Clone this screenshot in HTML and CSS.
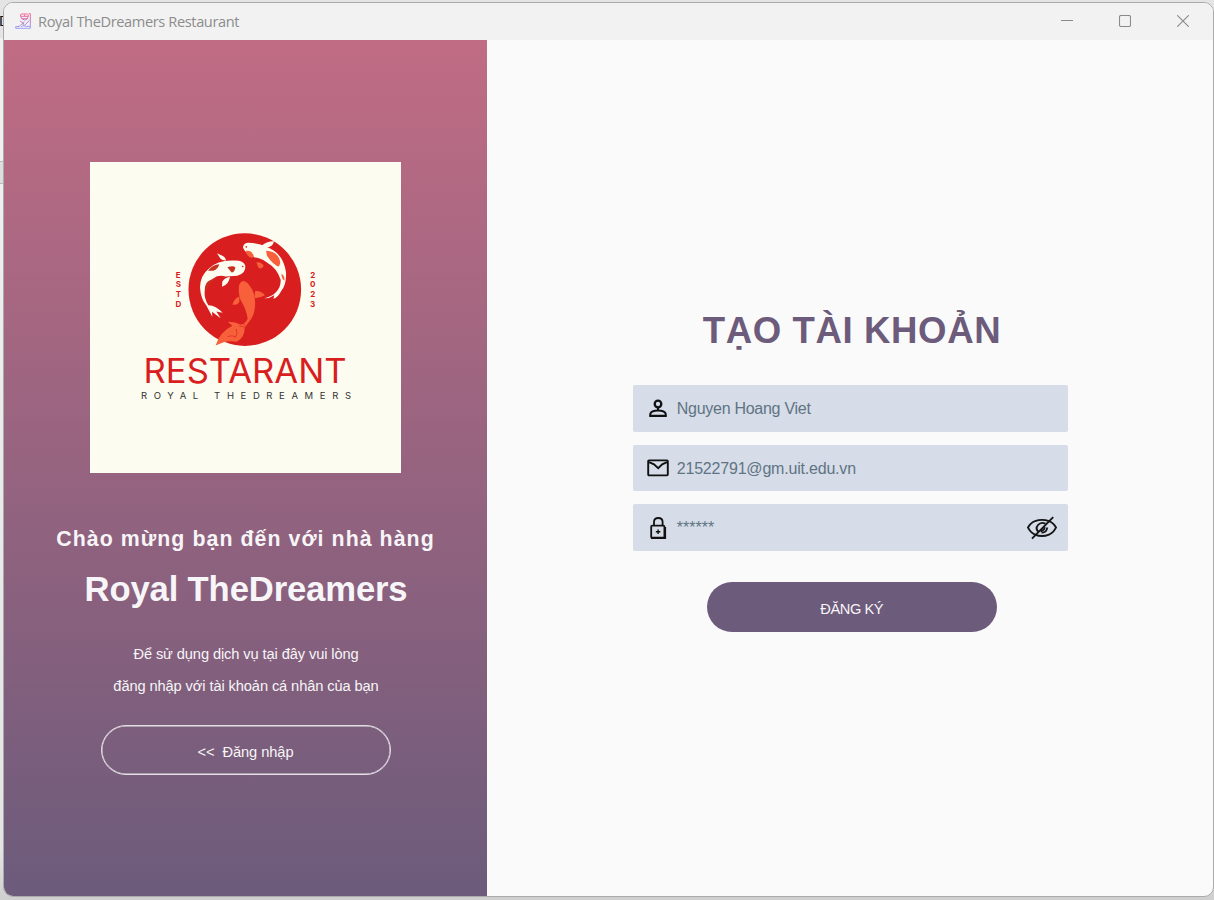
FILE: index.html
```html
<!DOCTYPE html>
<html lang="vi">
<head>
<meta charset="utf-8">
<title>Royal TheDreamers Restaurant</title>
<link rel="stylesheet" href="styles.css">
</head>
<body>
<div class="behind-text">D</div>
<div class="behind-strip"></div>
<main class="window">
  <header class="titlebar">
    <svg class="app-icon" width="16" height="16" viewBox="0 0 48 48" fill="none" stroke-width="2.6">
      <defs><linearGradient id="ic" x1="0" y1="0" x2="0" y2="48" gradientUnits="userSpaceOnUse"><stop offset="0" stop-color="#ff4f7d"/><stop offset=".5" stop-color="#b96fc0"/><stop offset="1" stop-color="#8a9cff"/></linearGradient></defs>
      <g stroke="url(#ic)"><path d="M17 11q-3-8 4-8h16q6 2 2 8l-2 6H20z"/><path d="M41 2h5v44H2v-5h10M20 17q9 9 18 0M18 10h22M29 4v6M15 24l9 6-10 9-6 2M27 26l-3 10M43 22L30 36l-12 5M28 40h18"/></g>
    </svg>
    <h1 class="window-title">Royal TheDreamers Restaurant</h1>
    <div class="controls">
      <svg width="12" height="12" viewBox="0 0 12 12"><path d="M0 5.5h12"/></svg>
      <svg width="12" height="12" viewBox="0 0 12 12"><rect x=".5" y=".5" width="11" height="11" rx="1.5"/></svg>
      <svg width="12" height="12" viewBox="0 0 12 12"><path d="M.2.2l11.6 11.6M11.8.2.2 11.8"/></svg>
    </div>
  </header>
  <div class="content">
    <section class="welcome">
      <svg class="logo" width="311" height="311" viewBox="90 161.5 311 311">
        <rect x="90" y="161.5" width="311" height="311" fill="#fdfcf0"/>
        <circle cx="244.8" cy="289.1" r="56.3" fill="#d91e1f"/>
        <g transform="translate(165 224.7) scale(.33333)">
          <g fill="#fdfcf0">
            <path d="M241 122Q236 105 207 106Q158 104 132 130Q106 150 105 187Q107 220 124 241L142 275L141 260L167 279L154 259L173 263Q153 241 130 240Q117 221 119 197Q121 171 146 159Q160 148 182 154L217 152Q243 145 241 122Z"/>
            <path d="M183 106Q181 95 172 92L156 84L164 97Q169 106 183 106ZM195 155Q178 159 172 169L171 185Q192 178 195 155Z"/>
            <path d="M234 67Q235 53 251 53Q293 54 327 77Q356 96 363 141Q365 178 349 197Q338 219 325 221L328 210Q313 220 298 219Q320 215 332 202Q348 187 347 164Q337 130 306 112Q286 97 267 96Q240 84 234 67Z"/>
            <path d="M289 63Q303 48 327 48Q323 67 302 66Z"/>
          </g>
          <g fill="#c9301f">
            <path d="M129 137Q143 117 163 117Q158 133 144 137ZM187 126Q206 120 211 127Q208 142 200 142ZM119 191Q123 169 134 166L158 158Q134 171 128 191Z"/>
          </g>
          <g fill="#f7603b">
            <path d="M303 77Q341 78 346 113L342 124Q326 122 306 92ZM243 77Q261 74 267 94Q257 105 244 85ZM274 112Q288 109 296 122Q289 135 280 126ZM349 146Q361 153 358 167Q350 161 349 146Z"/>
            <path d="M222 181Q228 166 239 168Q250 172 255 183Q273 204 270 245Q268 276 246 297Q243 304 239 308Q240 337 215 350Q187 343 152 361Q164 321 202 302L188 290Q210 289 226 298Q239 300 248 281Q243 249 227 225Q219 205 222 181Z"/>
            <path d="M270 198Q286 196 300 210Q279 220 269 218ZM223 215Q209 218 202 238Q218 241 223 230Z"/>
          </g>
          <path d="M188 334Q206 329 211 337Q220 325 213 311M223 302L239 306M230 292L242 302" fill="none" stroke="#d91e1f" stroke-width="2"/>
          <g fill="#d91e1f"><circle cx="233" cy="124" r="2.5"/><circle cx="244" cy="65" r="2.5"/></g>
        </g>
        <g class="logo-side">
          <text x="178.3" y="277.4">E</text><text x="178.3" y="286.8">S</text><text x="178.3" y="296.5">T</text><text x="178.3" y="306">D</text>
          <text x="312.7" y="277.4">2</text><text x="312.7" y="286.8">0</text><text x="312.7" y="296.5">2</text><text x="312.7" y="306">3</text>
        </g>
        <text class="logo-name" x="143.6" y="382.8" textLength="203" lengthAdjust="spacingAndGlyphs">RESTARANT</text>
        <text class="logo-sub" x="141" y="398" textLength="210">ROYAL THEDREAMERS</text>
      </svg>
      <p class="greeting">Chào mừng bạn đến với nhà hàng</p>
      <h2 class="brand">Royal TheDreamers</h2>
      <p class="hint">Để sử dụng dịch vụ tại đây vui lòng<br>đăng nhập với tài khoản cá nhân của bạn</p>
      <button class="pill login">&lt;&lt;&nbsp; Đăng nhập</button>
    </section>
    <section class="signup">
      <h2 class="form-title">TẠO TÀI KHOẢN</h2>
      <div class="fields">
        <div class="field">
          <svg width="24" height="24" viewBox="0 0 24 24" fill="none" stroke="#111" stroke-width="2"><circle cx="12" cy="7" r="3.3" stroke-width="2.3"/><path d="M4.3 18.8v-2q1-3.2 7.7-3.2t7.7 3.2v2z"/><path d="M12 10.5v3M3.5 19h17"/></svg>
          <span>Nguyen Hoang Viet</span>
        </div>
        <div class="field">
          <svg width="24" height="24" viewBox="0 0 24 24" fill="none" stroke="#111" stroke-width="1.9"><rect x="2.2" y="4.4" width="19.6" height="15" rx=".8"/><path d="M3 6.2l5 2.2 4.2 3.8 4-3.8L21 6.2"/></svg>
          <span class="email">21522791@gm.uit.edu.vn</span>
        </div>
        <div class="field">
          <svg width="24" height="24" viewBox="0 0 24 24" fill="none" stroke="#111" stroke-width="1.8"><path d="M8 9.5V6Q8 2 12.3 2t4.3 4v3.5"/><rect x="5.2" y="9.7" width="13.2" height="12" rx="1"/><path d="M5 22h14.2v-11"/><path d="M12.1 13.5v4.6M9.8 15.8h4.6" stroke-width="1.4"/></svg>
          <span class="password">******</span>
          <svg class="eye" width="32" height="26" viewBox="0 0 32 26" fill="none" stroke="#151515" stroke-width="1.9"><path d="M2 12.6Q5 7.5 9 6.2Q16 3.5 23 6.2Q27 7.5 30 12.6Q27 18 23 19.6Q16 22.5 9 19.6Q5 18 2 12.6z"/><path d="M19.5 8.7Q15 6.5 12 10T12.5 16.8M21.2 12.5Q20.5 18 15.5 17.6M18.5 12.2q.3 3-4 4"/><path d="M27.2 2.2L6 23.7"/></svg>
        </div>
      </div>
      <button class="pill register">ĐĂNG KÝ</button>
    </section>
  </div>
</main>
</body>
</html>
```
FILE: styles.css
```css
* { box-sizing: border-box; margin: 0; }
body {
  width: 1214px; height: 900px; padding: 2px 0 0 3px; overflow: hidden;
  position: relative; font-family: "Liberation Sans", Arial, sans-serif;
  background: linear-gradient(#e4e4e4 0 38px, #f0f0f0 38px 160px, #efefef 185px, #e4e4e4 850px, #cfcfcf);
}
.behind-text { position: absolute; left: -1px; top: 12px; font-size: 15px; color: #111; }
.behind-strip { position: absolute; left: 0; top: 161px; width: 4px; height: 23px; background: #ddd; border: solid #bbb; border-width: 1px 0; }
.window {
  position: relative; width: 1211px; height: 895px; overflow: hidden;
  border: 1px solid #aaa; border-radius: 10px; background: #fafafa;
}
.titlebar { height: 37px; display: flex; align-items: center; padding: 0 24px 2px 11px; background: #f2f2f2; }
.app-icon { margin-right: 7px; }
.window-title { font: 400 14.6px "Open Sans", sans-serif; color: #8c8c8c; letter-spacing: -.38px; }
.controls { margin-left: auto; display: flex; gap: 46px; }
.controls svg { fill: none; stroke: #8a8a8a; stroke-width: 1.1; }
.content { display: flex; height: 856px; }
.welcome {
  width: 483px; display: flex; flex-direction: column; align-items: center;
  color: #f7f5f7; background: linear-gradient(#c06c84, #6c5b7b);
}
.logo { margin-top: 122px; flex: none; }
.logo-side { font: 700 8px Inter, sans-serif; fill: #d91e1f; text-anchor: middle; }
.logo-name { font: 400 34px Inter, sans-serif; fill: #d91e1f; }
.logo-sub { font: 400 9.5px Inter, sans-serif; fill: #333; }
.greeting { margin-top: 52px; font-size: 21.33px; font-weight: 700; line-height: 28px; letter-spacing: 1.05px; white-space: nowrap; }
.brand { margin: 15px 0 0 1px; font-size: 34.67px; line-height: 42px; letter-spacing: -.15px; white-space: nowrap; }
.hint { margin-top: 28px; padding-left: 1px; font-size: 14.67px; line-height: 32px; letter-spacing: -.11px; text-align: center; }
.pill { width: 290px; height: 50px; border-radius: 25px; font: 14.67px "Liberation Sans", Arial, sans-serif; color: #f7f5f7; padding: 3px 0 0; }
.login { margin-top: 23.4px; border: 1px solid #e4dfe5; box-shadow: inset 0 0 0 .5px #e4dfe5; background: transparent; letter-spacing: -.08px; }
.signup { flex: 1; display: flex; flex-direction: column; align-items: center; padding-left: 1px; }
.form-title { margin: 269px 0 0 3px; font-size: 36.6px; line-height: 44px; color: #6c5b7b; letter-spacing: .6px; white-space: nowrap; }
.fields { display: grid; gap: 13px; margin-top: 32px; }
.field { width: 435.5px; height: 46.67px; display: flex; align-items: center; padding: 1px 10.5px 0 13px; background: #d6dce8; border-radius: 2px; font-size: 16px; color: #5f7483; letter-spacing: -.27px; }
.field span { margin-left: 7px; padding-top: 1px; }
.field .email { letter-spacing: -.2px; padding-top: 2px; }
.field .password { letter-spacing: 0; padding-top: 0; }
.field svg { flex: none; }
.field .eye { margin-left: auto; }
.register { margin: 31px 0 0 2.5px; border: 0; background: #6c5b7b; letter-spacing: -.45px; padding-top: 4px; }
```
